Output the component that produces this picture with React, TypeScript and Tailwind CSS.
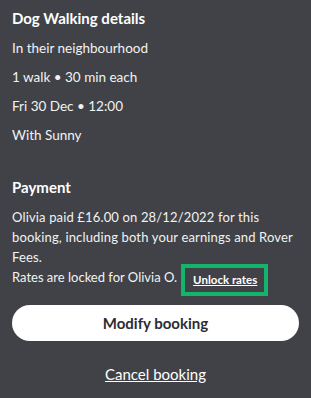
export default function App() {
  return (
    <div className="w-[311px] h-[398px] bg-[#404247] text-[#f2f2f2] px-3 pt-[7px]" style={{ fontFamily: "Lato, 'Noto Sans', sans-serif" }}>
      <h2 className="text-[15px] font-bold leading-[22px] text-white">Dog Walking details</h2>
      <div className="mt-[9px] flex flex-col gap-[9px] text-[13.5px] leading-[20px]">
        <p>In their neighbourhood</p>
        <p>1 walk • 30 min each</p>
        <p>Fri 30 Dec • 12:00</p>
        <p>With Sunny</p>
      </div>
      <h2 className="mt-[31px] text-[15px] font-bold leading-[22px] text-white">Payment</h2>
      <p className="mt-[9px] text-[13px] leading-[20px] tracking-[0.15px]">
        Olivia paid £16.00 on 28/12/2022 for this booking, including both your earnings and Rover Fees.
      </p>
      <div className="flex items-start text-[13px] leading-[20px]">
        <span>Rates are locked for Olivia O.</span>
        <span className="ml-[4px] -mt-[3px] border-4 border-[#13b46c] pl-[8px] pr-[7px] py-[5px] text-[11.5px] leading-[14px] font-bold underline text-white">
          Unlock rates
        </span>
      </div>
      <button className="mt-[9px] w-full h-[36px] rounded-full bg-white text-[#2c2d31] text-[15px] font-bold">
        Modify booking
      </button>
      <div className="mt-[22px] text-center leading-[22px]">
        <a className="text-[15px] underline text-white">Cancel booking</a>
      </div>
    </div>
  );
}
